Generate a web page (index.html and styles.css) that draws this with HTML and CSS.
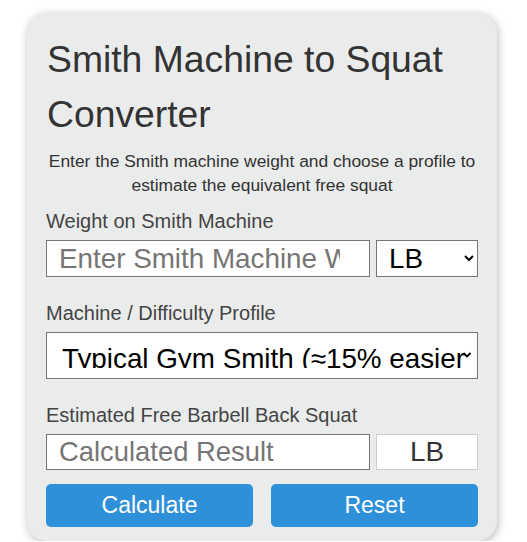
FILE: index.html
```html
<!DOCTYPE html>
<html lang="en">
<head>
<meta charset="utf-8">
<title>Smith Machine to Squat Converter</title>
<link rel="stylesheet" href="styles.css">
</head>
<body>
<div class="card">
  <h1 class="title">Smith Machine to Squat Converter</h1>
  <p class="subtitle">Enter the Smith machine weight and choose a profile to estimate the equivalent free squat</p>

  <div class="field">
    <label class="label" for="smith">Weight on Smith Machine</label>
    <div class="row">
      <input class="input" id="smith" type="text" placeholder="Enter Smith Machine Weight">
      <select class="unit">
        <option>LB</option>
        <option>KG</option>
      </select>
    </div>
  </div>

  <div class="field">
    <label class="label" for="profile">Machine / Difficulty Profile</label>
    <div class="select-wrap">
      <select class="profile" id="profile">
        <option>Typical Gym Smith (≈15% easier)</option>
      </select>
      <svg class="chevron" width="10" height="8" viewBox="0 0 10 8" aria-hidden="true">
        <path d="M1.5 2 L5 5.5 L8.5 2" fill="none" stroke="#000" stroke-width="1.8"/>
      </svg>
    </div>
  </div>

  <div class="field last">
    <label class="label" for="result">Estimated Free Barbell Back Squat</label>
    <div class="row">
      <input class="input result" id="result" type="text" placeholder="Calculated Result" readonly>
      <div class="unit-box">LB</div>
    </div>
  </div>

  <div class="buttons">
    <button class="btn" type="button">Calculate</button>
    <button class="btn" type="button">Reset</button>
  </div>
</div>
</body>
</html>
```

FILE: styles.css
```css
* {
  box-sizing: border-box;
}

html, body {
  margin: 0;
  padding: 0;
  background: #ffffff;
}

body {
  font-family: "Liberation Sans", Arial, sans-serif;
  color: #333333;
}

.card {
  width: 470px;
  margin: 13px 0 0 27px;
  padding: 19px 19px 14px 19px;
  background: #eaeceb;
  border-radius: 20px;
  box-shadow: 1px 2px 8px rgba(0, 0, 0, 0.28);
}

.title {
  margin: 0;
  font-size: 37.3px;
  line-height: 55px;
  font-weight: normal;
  color: #333333;
  padding-left: 1px;
}

.subtitle {
  margin: 7px 0 10px;
  font-size: 17.4px;
  line-height: 24px;
  text-align: center;
  color: #333333;
}

.field {
  margin-bottom: 22px;
}

.field.last {
  margin-bottom: 14px;
}

.label {
  display: block;
  font-size: 20px;
  line-height: 29px;
  color: #444444;
  margin-bottom: 4px;
}

.row {
  display: flex;
  gap: 6px;
}

.input {
  flex: 1 1 auto;
  min-width: 0;
  height: 37px;
  padding: 0 29px 0 12px;
  font-family: "Liberation Sans", Arial, sans-serif;
  font-size: 27.8px;
  color: #222222;
  background: #ffffff;
  border: 1px solid #767676;
  border-radius: 0;
  outline: none;
}

.input::placeholder {
  color: #757575;
}

.result {
  height: 36px;
  font-size: 27.4px;
}

.unit {
  flex: 0 0 102px;
  width: 102px;
  height: 37px;
  padding: 0 8px 0 8px;
  font-family: "Liberation Sans", Arial, sans-serif;
  font-size: 27.8px;
  color: #000000;
  background-color: #ffffff;
  border: 1px solid #767676;
  border-radius: 0;
}

.select-wrap {
  position: relative;
  height: 47px;
  background: #ffffff;
  border: 1px solid #767676;
}

.profile {
  display: block;
  width: 100%;
  height: 41px;
  margin: 0;
  padding: 10px 12px 0 15px;
  font-family: "Liberation Sans", Arial, sans-serif;
  font-size: 27.8px;
  line-height: 32px;
  color: #000000;
  background: transparent;
  border: none;
  border-radius: 0;
  outline: none;
  -webkit-appearance: none;
  appearance: none;
  clip-path: inset(10px 11px 6px 0);
}

.chevron {
  position: absolute;
  right: 5px;
  top: 18px;
  pointer-events: none;
}

.unit-box {
  flex: 0 0 102px;
  height: 36px;
  display: flex;
  align-items: center;
  justify-content: center;
  font-size: 27.8px;
  color: #333333;
  background: #ffffff;
  border: 1px solid #cccccc;
}

.buttons {
  display: flex;
  gap: 18px;
}

.btn {
  flex: 1 1 0;
  height: 43px;
  padding: 0;
  font-family: "Liberation Sans", Arial, sans-serif;
  font-size: 23px;
  color: #ffffff;
  background: #2e90d8;
  border: none;
  border-radius: 5px;
}
```
